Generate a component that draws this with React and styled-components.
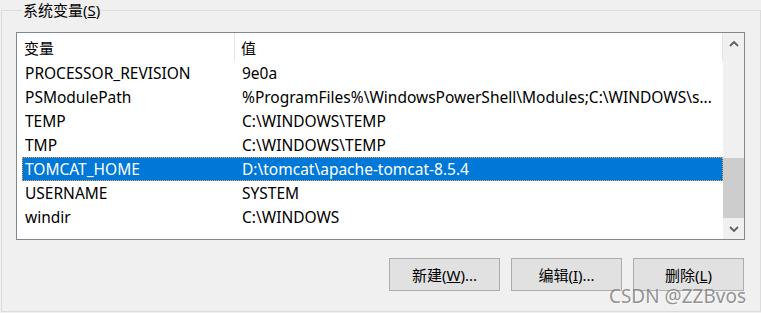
import styled, { createGlobalStyle } from 'styled-components';

const GlobalStyle = createGlobalStyle`
  body {
    margin: 0;
    background: #f0f0f0;
    font-family: 'Noto Sans', 'Noto Sans CJK SC', sans-serif;
    font-size: 15.5px;
    color: #000;
  }
`;

const Frame = styled.div`
  position: relative;
  width: 761px;
  height: 313px;
  background: #f0f0f0;
  overflow: hidden;
`;

const GroupBox = styled.fieldset`
  margin: 0 0 0 1px;
  width: 760px;
  height: 312px;
  box-sizing: border-box;
  border: 1px solid #dcdcdc;
  padding: 0 15px 0 14px;
  min-width: 0;
`;

const Legend = styled.legend`
  margin-left: 6px;
  padding: 0 1px;
  line-height: 20px;
  font-size: 15px;
`;

const ListBox = styled.div`
  margin-top: 12px;
  height: 208px;
  box-sizing: border-box;
  border: 1px solid #828790;
  background: #fff;
  display: flex;
`;

const ListBody = styled.div`
  flex: 1;
  min-width: 0;
  display: flex;
  flex-direction: column;
`;

const Header = styled.div`
  display: grid;
  grid-template-columns: 218px 1fr;
  height: 28px;
`;

const HeaderCell = styled.div`
  display: flex;
  align-items: center;
  padding-left: ${(p) => p.$pad}px;
  border-right: 1px solid #e5e5e5;
  font-size: 15px;
`;

const Row = styled.div`
  display: grid;
  grid-template-columns: 212px 1fr;
  height: 24px;
  line-height: 21px;
  margin-left: 5px;
  box-sizing: border-box;
  align-items: center;
  border: 1px dotted ${(p) => (p.$selected ? '#f3a346' : 'transparent')};
  background: ${(p) => (p.$selected ? '#0078d7' : 'transparent')};
  color: ${(p) => (p.$selected ? '#fff' : '#000')};
`;

const Cell = styled.div`
  padding-left: ${(p) => p.$pad}px;
  white-space: nowrap;
  overflow: hidden;
`;

const ScrollBar = styled.div`
  width: 21px;
  background: #f0f0f0;
  display: flex;
  flex-direction: column;
`;

const ScrollButton = styled.div`
  height: 21px;
  display: flex;
  align-items: center;
  justify-content: center;
`;

const Track = styled.div`
  flex: 1;
  display: flex;
  flex-direction: column;
  justify-content: flex-end;
`;

const Thumb = styled.div`
  height: 60px;
  background: #cdcdcd;
`;

const ButtonRow = styled.div`
  display: flex;
  justify-content: flex-end;
  gap: 11px;
  margin-top: 18px;
  margin-right: 1px;
`;

const Button = styled.button`
  width: 111px;
  height: 33px;
  box-sizing: border-box;
  background: #e1e1e1;
  border: 1px solid #adadad;
  font-family: inherit;
  font-size: 15px;
  color: #000;
  padding: 0;
`;

const Watermark = styled.div`
  position: absolute;
  right: 15px;
  bottom: 6px;
  font-family: 'Noto Sans', sans-serif;
  font-size: 19px;
  line-height: 22px;
  color: rgba(120, 120, 120, 0.8);
  text-shadow: 1px 1px 0 rgba(255, 255, 255, 0.7);
`;

const Chevron = ({ down }) => (
  <svg width="10" height="6" viewBox="0 0 10 6">
    <polyline
      points={down ? '1,1 5,5 9,1' : '1,5 5,1 9,5'}
      fill="none"
      stroke="#606060"
      strokeWidth="1.8"
    />
  </svg>
);

const vars = [
  ['PROCESSOR_REVISION', '9e0a'],
  ['PSModulePath', '%ProgramFiles%\\WindowsPowerShell\\Modules;C:\\WINDOWS\\s...'],
  ['TEMP', 'C:\\WINDOWS\\TEMP'],
  ['TMP', 'C:\\WINDOWS\\TEMP'],
  ['TOMCAT_HOME', 'D:\\tomcat\\apache-tomcat-8.5.4'],
  ['USERNAME', 'SYSTEM'],
  ['windir', 'C:\\WINDOWS'],
];

export default function App() {
  return (
    <Frame>
      <GlobalStyle />
      <GroupBox>
        <Legend>
          系统变量(<u>S</u>)
        </Legend>
        <ListBox>
          <ListBody>
            <Header>
              <HeaderCell $pad={7}>变量</HeaderCell>
              <HeaderCell $pad={6}>值</HeaderCell>
            </Header>
            {vars.map(([name, value], i) => (
              <Row key={i} $selected={name === 'TOMCAT_HOME'}>
                <Cell $pad={2}>{name}</Cell>
                <Cell $pad={7}>{value}</Cell>
              </Row>
            ))}
          </ListBody>
          <ScrollBar>
            <ScrollButton>
              <Chevron />
            </ScrollButton>
            <Track>
              <Thumb />
            </Track>
            <ScrollButton>
              <Chevron down />
            </ScrollButton>
          </ScrollBar>
        </ListBox>
        <ButtonRow>
          <Button>
            新建(<u>W</u>)...
          </Button>
          <Button>
            编辑(<u>I</u>)...
          </Button>
          <Button>
            删除(<u>L</u>)
          </Button>
        </ButtonRow>
      </GroupBox>
      <Watermark>CSDN @ZZBvos</Watermark>
    </Frame>
  );
}
